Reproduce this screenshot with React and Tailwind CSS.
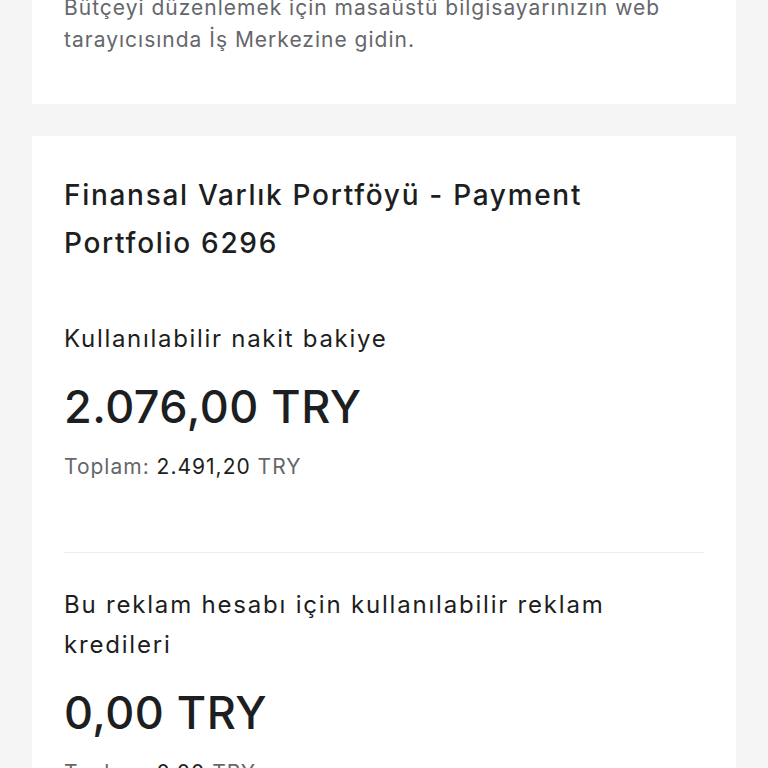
export default function App() {
  const font = { fontFamily: 'Inter, "Noto Sans", sans-serif' };

  return (
    <div className="min-h-screen bg-[#f5f5f5] overflow-hidden" style={font}>
      <div className="flex flex-col gap-8 px-8 -mt-2">
        {/* info card, scrolled partly out of view */}
        <div className="bg-white px-8 pb-12">
          <p className="text-[21px] leading-8 tracking-[1px] text-[#65676b] max-w-[620px]">
            Bütçeyi düzenlemek için masaüstü bilgisayarınızın web tarayıcısında İş Merkezine gidin.
          </p>
        </div>

        {/* portfolio card */}
        <div className="bg-white px-8 pt-[35px]">
          <h2 className="text-[28px] leading-[48px] font-medium tracking-[1.7px] text-[#1c1e21] max-w-[600px]">
            Finansal Varlık Portföyü - Payment Portfolio 6296
          </h2>

          <div className="mt-[52px]">
            <p className="text-[24px] leading-10 tracking-[1.7px] text-[#1c1e21]">Kullanılabilir nakit bakiye</p>
            <p className="mt-5 text-[45px] leading-[56px] font-medium tracking-[0.5px] text-[#1c1e21]">
              2.076,00 TRY
            </p>
            <p className="mt-4 text-[21px] leading-8 tracking-[1px] text-[#65676b]">
              Toplam: <span className="text-[#1c1e21]">2.491,20</span> TRY
            </p>
          </div>

          <div className="mt-[69px] h-px bg-[#ebedf0]" />

          <div className="mt-8">
            <p className="text-[24px] leading-10 tracking-[1.8px] text-[#1c1e21] max-w-[600px]">
              Bu reklam hesabı için kullanılabilir reklam kredileri
            </p>
            <p className="mt-5 text-[45px] leading-[56px] font-medium tracking-[0.5px] text-[#1c1e21]">
              0,00 TRY
            </p>
            <p className="mt-4 text-[21px] leading-8 tracking-[1px] text-[#65676b]">
              Toplam: <span className="text-[#1c1e21]">0,00</span> TRY
            </p>
          </div>

          <div className="h-12" />
        </div>
      </div>
    </div>
  );
}
